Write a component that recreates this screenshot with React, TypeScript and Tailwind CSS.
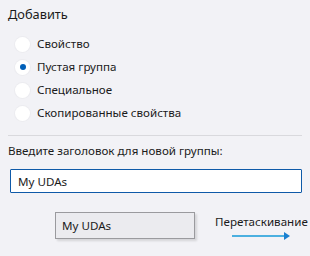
import { useState } from 'react';

const options = ['Свойство', 'Пустая группа', 'Специальное', 'Скопированные свойства'];

export default function App() {
  const [selected, setSelected] = useState(1);
  const [title, setTitle] = useState('My UDAs');

  return (
    <div
      className="w-[310px] h-[256px] bg-[#f2f2f6] text-[#1b1b1b] text-[11.6px] overflow-hidden"
      style={{ fontFamily: '"Noto Sans", "Open Sans", sans-serif' }}
    >
      <div className="px-2 pt-[5px]">
        {/* Header */}
        <h2 className="text-[12.8px] leading-[18px]">Добавить</h2>

        {/* Options */}
        <div className="mt-[13px] flex flex-col gap-[7px] pl-[7px]">
          {options.map((opt, i) => (
            <label
              key={opt}
              className="flex items-center gap-[6px] h-[16px] cursor-pointer"
              onClick={() => setSelected(i)}
            >
              <span className="w-[15px] h-[15px] rounded-full bg-white shadow-[0_0_0_1px_#ececf0] flex items-center justify-center">
                {selected === i && <span className="w-[6px] h-[6px] rounded-full bg-[#005fb8]" />}
              </span>
              <span className="ml-[1px] leading-[16px]">{opt}</span>
            </label>
          ))}
        </div>

        {/* Divider */}
        <div className="mt-[14px] h-px bg-[#d9d9dd]" />

        {/* Title input */}
        <p className="mt-[7px] leading-[16px]">Введите заголовок для новой группы:</p>
        <input
          value={title}
          onChange={(e) => setTitle(e.target.value)}
          className="mt-[10px] ml-[2px] w-[292px] h-[24px] px-[7px] bg-white border border-[#0f5aa8] rounded-[1px] text-[11.6px] text-[#1b1b1b] outline-none"
          style={{ fontFamily: '"Noto Sans", "Open Sans", sans-serif' }}
        />

        {/* Drag preview */}
        <div className="mt-[19px] flex items-start">
          <div className="shrink-0 ml-[47px] w-[140px] h-[27px] bg-[#ebebef] border border-[#9a9a9e] shadow-[2px_2px_2px_rgba(0,0,0,0.12)] flex items-center px-[6px]">
            My UDAs
          </div>
          <div className="shrink-0 whitespace-nowrap ml-[20px] mt-[2px] flex flex-col">
            <span className="leading-[16px]">Перетаскивание</span>
            <svg width="60" height="8" viewBox="0 0 60 8" className="ml-[17px] mt-[2px]">
              <line x1="0" y1="4" x2="53" y2="4" stroke="#4cb0e0" strokeWidth="2" />
              <path d="M52 0 L58 4 L52 8 Z" fill="#1a7fd0" />
            </svg>
          </div>
        </div>
      </div>
    </div>
  );
}
